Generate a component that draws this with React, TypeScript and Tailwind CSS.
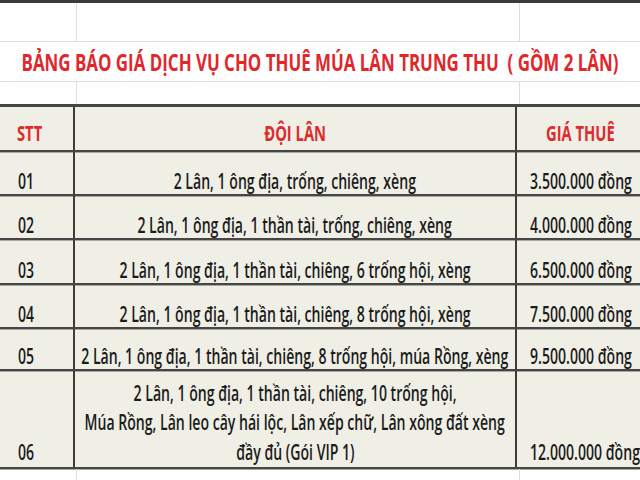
import React from 'react';

interface PriceRow {
  stt: string;
  lines: string[];
  price: string;
  h: string;
}

const rows: PriceRow[] = [
  { stt: '01', lines: ['2 Lân, 1 ông địa, trống, chiêng, xèng'], price: '3.500.000 đồng', h: 'h-[44px]' },
  { stt: '02', lines: ['2 Lân, 1 ông địa, 1 thần tài, trống, chiêng, xèng'], price: '4.000.000 đồng', h: 'h-[44px]' },
  { stt: '03', lines: ['2 Lân, 1 ông địa, 1 thần tài, chiêng, 6 trống hội, xèng'], price: '6.500.000 đồng', h: 'h-[45px]' },
  { stt: '04', lines: ['2 Lân, 1 ông địa, 1 thần tài, chiêng, 8 trống hội, xèng'], price: '7.500.000 đồng', h: 'h-[44px]' },
  { stt: '05', lines: ['2 Lân, 1 ông địa, 1 thần tài, chiêng, 8 trống hội, múa Rồng, xèng'], price: '9.500.000 đồng', h: 'h-[42px]' },
];

const lastRow: PriceRow = {
  stt: '06',
  lines: [
    '2 Lân, 1 ông địa, 1 thần tài, chiêng, 10 trống hội,',
    'Múa Rồng, Lân leo cây hái lộc, Lân xếp chữ, Lân xông đất xèng',
    'đầy đủ (Gói VIP 1)',
  ],
  price: '12.000.000 đồng',
  h: 'h-[98px]',
};

function GridRow({ h }: { h: string }) {
  return (
    <div className={`grid grid-cols-[77px_443px_1fr] ${h}`}>
      <div className="border-r border-[#dedede]" />
      <div className="border-r border-[#dedede]" />
      <div />
    </div>
  );
}

// condensed look: the sheet uses a narrow font, so squeeze Open Sans
function Txt({ children, left }: { children: React.ReactNode; left?: boolean }) {
  return (
    <span className={`inline-block whitespace-nowrap scale-x-[0.67] ${left ? 'origin-left' : ''}`}>
      {children}
    </span>
  );
}

const line = 'border-b-2 border-[#464646] shadow-[0_1px_0_#a8a8a0]';
const vline = 'border-r-2 border-[#3c3c3c]';

export default function App() {
  return (
    <div className="w-[640px] h-[480px] bg-white overflow-hidden font-['Open_Sans',sans-serif] text-[#1c1c1c]">
      <div className="h-[3px] bg-[#3b3b3b]" />
      <GridRow h="h-[38px]" />
      <div className="h-[41px] border-y border-[#dedede] flex items-center justify-center pt-[2px]">
        <span className="inline-block whitespace-nowrap scale-x-[0.735] text-[23px] font-bold text-[#e2272c]">
          BẢNG BÁO GIÁ DỊCH VỤ CHO THUÊ MÚA LÂN TRUNG THU&nbsp;&nbsp;( GỒM 2 LÂN)
        </span>
      </div>
      <GridRow h="h-[22px]" />

      <div className="bg-[#efefe6] border-t-[3px] border-[#454545] text-[21px] font-semibold leading-[26px]">
        <div className={`grid grid-cols-[75px_442px_1fr] h-[45px] ${line} font-bold text-[22px] text-[#df2a2e]`}>
          <div className={`${vline} flex items-end pb-[5px] pl-[17px]`}>
            <Txt left>STT</Txt>
          </div>
          <div className={`${vline} flex items-end justify-center pb-[5px]`}>
            <Txt>ĐỘI LÂN</Txt>
          </div>
          <div className="flex items-end pb-[5px] pl-[29px]">
            <Txt left>GIÁ THUÊ</Txt>
          </div>
        </div>

        {rows.map((row) => (
          <div key={row.stt} className={`grid grid-cols-[75px_442px_1fr] ${row.h} ${line}`}>
            <div className={`${vline} flex items-end pl-[18px]`}>
              <Txt left>{row.stt}</Txt>
            </div>
            <div className={`${vline} flex items-end justify-center`}>
              <Txt>{row.lines[0]}</Txt>
            </div>
            <div className="flex items-end pl-[13px]">
              <Txt left>{row.price}</Txt>
            </div>
          </div>
        ))}

        <div className={`grid grid-cols-[75px_442px_1fr] ${lastRow.h} ${line} leading-[29.5px]`}>
          <div className={`${vline} flex items-end pl-[18px]`}>
            <Txt left>{lastRow.stt}</Txt>
          </div>
          <div className={`${vline} flex flex-col items-center justify-end`}>
            {lastRow.lines.map((l) => (
              <Txt key={l}>{l}</Txt>
            ))}
          </div>
          <div className="flex items-end pl-[13px]">
            <Txt left>{lastRow.price}</Txt>
          </div>
        </div>
      </div>

      <GridRow h="h-[20px]" />
    </div>
  );
}
